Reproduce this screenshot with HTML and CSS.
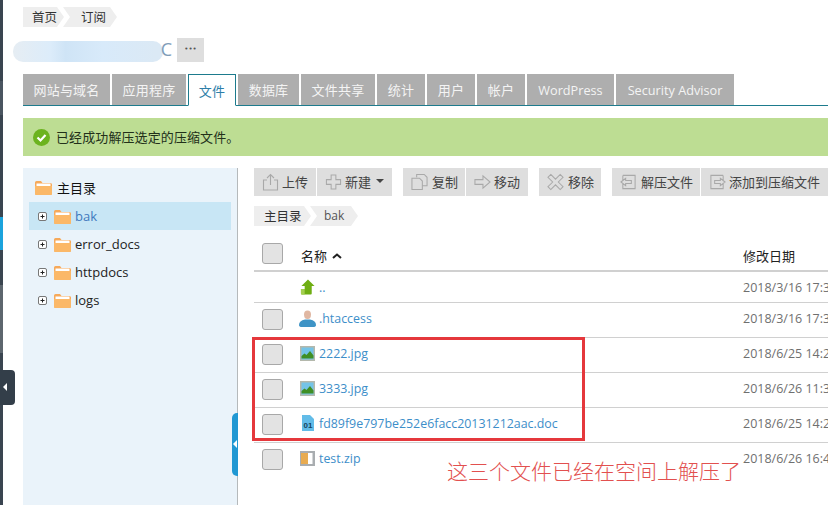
FILE: index.html
```html
<!DOCTYPE html>
<html lang="zh">
<head>
<meta charset="utf-8">
<title>文件</title>
<link rel="stylesheet" href="styles.css">
</head>
<body>
<svg class="defs" width="0" height="0" aria-hidden="true">
  <symbol id="folder" viewBox="0 0 17 15">
    <path d="M0 2.500Q0 1 1.500 1H6L7.500 3H15.500Q17 3 17 4.500V13.500Q17 15 15.500 15H1.500Q0 15 0 13.500Z" fill="#f6a95a"/>
    <rect x="1.500" y="3.500" width="14" height="2.500" fill="#fff"/>
    <path d="M0 6H17V13.500Q17 15 15.500 15H1.500Q0 15 0 13.500Z" fill="#fbb868"/>
  </symbol>
  <symbol id="plus" viewBox="0 0 9 9">
    <rect x=".5" y=".5" width="8" height="8" rx="1.500" fill="#fff" stroke="#777"/>
    <path d="M2.500 4.500H6.500M4.500 2.500V6.500" stroke="#222"/>
  </symbol>
  <symbol id="pic" viewBox="0 0 15 15">
    <rect width="15" height="15" fill="#b4b8ac"/>
    <rect x="1.500" y="1.500" width="12" height="12" fill="#74c4e8"/>
    <path d="M1.500 12.500V10L4.500 7.500L6.500 9L10 5L13.500 9.500V12.500Z" fill="#3f8f25"/>
  </symbol>
</svg>

<div class="page">
  <div class="rail">
    <div class="rail-a"></div>
    <div class="rail-light r1"></div>
    <div class="rail-b"></div>
    <div class="rail-blue"></div>
    <div class="rail-c"></div>
    <div class="rail-light r2"></div>
  </div>
  <main class="main">
    <nav class="crumbs top-crumbs">
      <span class="crumb first">首页</span>
      <span class="crumb last">订阅</span>
    </nav>
    <div class="title-row">
      <div class="masked"><span class="masked-end">C</span></div>
      <button class="more">•••</button>
    </div>
    <div class="tabs">
      <span class="tab t1">网站与域名</span>
      <span class="tab t2">应用程序</span>
      <span class="tab active">文件</span>
      <span class="tab t3">数据库</span>
      <span class="tab t2">文件共享</span>
      <span class="tab t4">统计</span>
      <span class="tab t4">用户</span>
      <span class="tab t4">帐户</span>
      <span class="tab t5">WordPress</span>
      <span class="tab t6">Security Advisor</span>
    </div>
    <div class="notice">
      <svg class="ok" width="17" height="17" viewBox="0 0 17 17"><circle cx="8.500" cy="8.500" r="8.500" fill="#6cb31f"/><path d="M4.500 8.500L7.500 11.500L12.500 6" fill="none" stroke="#fff" stroke-width="2.200"/></svg>
      <span>已经成功解压选定的压缩文件。</span>
    </div>
    <div class="workspace">
      <aside class="tree">
        <div class="tree-root"><svg class="folder"><use href="#folder"/></svg><span>主目录</span></div>
        <div class="tree-item selected"><svg class="plus"><use href="#plus"/></svg><svg class="folder"><use href="#folder"/></svg><span>bak</span></div>
        <div class="tree-item"><svg class="plus"><use href="#plus"/></svg><svg class="folder"><use href="#folder"/></svg><span>error_docs</span></div>
        <div class="tree-item"><svg class="plus"><use href="#plus"/></svg><svg class="folder"><use href="#folder"/></svg><span>httpdocs</span></div>
        <div class="tree-item"><svg class="plus"><use href="#plus"/></svg><svg class="folder"><use href="#folder"/></svg><span>logs</span></div>
        <div class="tree-handle"></div>
      </aside>
      <section class="files">
        <div class="toolbar">
          <div class="group">
            <span class="tool w-upload"><svg viewBox="0 0 16 18" class="ti tight"><path d="M4.500 7H1V17H15V7H11.500M8 12V2M4.500 5L8 1.500L11.500 5" /></svg>上传</span>
            <span class="tool w-new"><svg viewBox="0 0 18 18" class="ti tight"><path d="M6.500 1.500H11.500V6.500H16.500V11.500H11.500V16.500H6.500V11.500H1.500V6.500H6.500Z"/></svg>新建<i class="caret"></i></span>
          </div>
          <div class="group">
            <span class="tool w-copy"><svg viewBox="0 0 18 18" class="ti"><path d="M6 4V1H14L17 4V13H12M1 5H9L12 8V17H1Z"/></svg>复制</span>
            <span class="tool w-move"><svg viewBox="0 0 18 18" class="ti tight"><path d="M1 6.500H9.500V2.500L17 9L9.500 15.500V11.500H1Z"/></svg>移动</span>
          </div>
          <div class="group">
            <span class="tool w-del"><svg viewBox="0 0 18 18" class="ti"><path d="M4 1L9 6L14 1L17 4L12 9L17 14L14 17L9 12L4 17L1 14L6 9L1 4Z"/></svg>移除</span>
          </div>
          <div class="group">
            <span class="tool w-ext"><svg viewBox="0 0 18 18" class="ti"><path d="M3 2H16V16H3V11M3 7V2M1 9L6 5V7.500H12V10.500H6V13Z"/></svg>解压文件</span>
            <span class="tool w-add"><svg viewBox="0 0 18 18" class="ti tight"><path d="M15 2H2V16H15V11M15 7V2M17 9L12 5V7.500H6V10.500H12V13Z"/></svg>添加到压缩文件</span>
          </div>
        </div>
        <nav class="crumbs path-crumbs">
          <span class="crumb first">主目录</span>
          <span class="crumb last latin">bak</span>
        </nav>
        <div class="table">
          <div class="row head">
            <span class="cell-check"><i class="check"></i></span>
            <span class="cell-name"><b class="name-head">名称</b><svg class="up" viewBox="0 0 10 6"><path d="M1 5L5 1.500L9 5" fill="none" stroke="#222" stroke-width="2"/></svg></span>
            <span class="cell-date date-head">修改日期</span>
          </div>
          <div class="row r-up">
            <span class="cell-check"></span>
            <span class="cell-name"><svg class="fi" viewBox="0 0 16 17"><path d="M8.500 0L15.500 7H12.500V15Q12.500 16 11.500 16H2Q1 16 1 15V10H5V7H1.500Z" fill="#6fae13"/><path d="M1 10H5V16H2Q1 16 1 15Z" fill="#a4cf4f"/></svg><a>..</a></span>
            <span class="cell-date">2018/3/16 17:31</span>
          </div>
          <div class="row r-std">
            <span class="cell-check"><i class="check"></i></span>
            <span class="cell-name"><svg class="fi wide" viewBox="0 0 17 17"><path d="M5 4.500Q5 .5 8.500 .5T12 4.500Q12 9 8.500 9T5 4.500Z" fill="#e0b7a2"/><path d="M0 15Q0 10.500 6 9.500H11Q17 10.500 17 15Q17 17 14 17H3Q0 17 0 15Z" fill="#3f94c6"/></svg><a>.htaccess</a></span>
            <span class="cell-date">2018/3/16 17:31</span>
          </div>
          <div class="row r-std">
            <span class="cell-check"><i class="check"></i></span>
            <span class="cell-name"><svg class="fi"><use href="#pic"/></svg><a>2222.jpg</a></span>
            <span class="cell-date">2018/6/25 14:26</span>
          </div>
          <div class="row r-std">
            <span class="cell-check"><i class="check"></i></span>
            <span class="cell-name"><svg class="fi"><use href="#pic"/></svg><a>3333.jpg</a></span>
            <span class="cell-date">2018/6/26 11:32</span>
          </div>
          <div class="row r-std">
            <span class="cell-check"><i class="check"></i></span>
            <span class="cell-name"><svg class="fi" viewBox="0 0 15 17"><path d="M2 0H10L14 4V16H2Z" fill="#62bce8"/><text x="8" y="13" class="doc-num">01</text></svg><a>fd89f9e797be252e6facc20131212aac.doc</a></span>
            <span class="cell-date">2018/6/25 14:26</span>
          </div>
          <div class="row r-std last-row">
            <span class="cell-check"><i class="check"></i></span>
            <span class="cell-name"><svg class="fi" viewBox="0 0 15 15"><rect width="15" height="15" fill="#a9adb0"/><rect x="1" y="2" width="7" height="11" fill="#e8ab50"/><rect x="8" y="2" width="4.500" height="11" fill="#fff"/></svg><a>test.zip</a></span>
            <span class="cell-date">2018/6/26 16:41</span>
          </div>
        </div>
      </section>
    </div>
  </main>
</div>

<div class="rail-handle"></div>
<div class="mark"></div>
<div class="note">这三个文件已经在空间上解压了</div>
</body>
</html>
```

FILE: styles.css
```css
* { box-sizing: border-box; }
html, body { margin: 0; height: 505px; overflow: hidden; background: #fff; }
body {
  position: relative;
  width: 828px;
  font-family: "Open Sans", "Noto Sans CJK SC", sans-serif;
  font-size: 13px;
  color: #333;
}
.defs { position: absolute; }
.page { display: flex; height: 505px; }

.rail { width: 3px; flex: none; background: #3a4550; display: flex; flex-direction: column; }
.rail-a { height: 81px; }
.rail-b { height: 102px; }
.rail-c { height: 35px; }
.r1 { height: 34px; background: #4a5560; }
.r2 { height: 68px; background: #5d666e; }
.rail-blue { height: 33px; background: #1ba3dd; }

.main { width: 825px; flex: none; padding: 7px 0 0 20px; overflow: hidden; }

.crumbs { display: flex; height: 20px; }
.crumb {
  display: flex;
  align-items: center;
  background: #eee;
  color: #333;
  font-size: 12.500px;
  padding-bottom: 2px;
  font-family: "Noto Sans CJK SC", sans-serif;
}
.top-crumbs .first { width: 41px; padding-left: 9px; clip-path: polygon(0 0, 34px 0, 41px 50%, 34px 100%, 0 100%); }
.top-crumbs .last { width: 54px; margin-left: -1px; padding-left: 18px; clip-path: polygon(0 0, 47px 0, 54px 50%, 47px 100%, 0 100%, 7px 50%); }

.title-row { display: flex; align-items: center; height: 24px; margin-top: 11px; }
.masked {
  width: 150px;
  height: 21px;
  margin-left: -10px;
  margin-top: 3px;
  border-radius: 10px;
  background: linear-gradient(90deg, #e6edf3 0, #dcecfa 25%, #cfe4f6 35%, #d8eafa 60%, #dbe9f5 95%);
  position: relative;
}
.masked-end { position: absolute; right: -9px; top: -4px; color: #7f9db8; font-size: 18px; }
.more {
  width: 27px;
  height: 24px;
  margin-left: 14px;
  border: 0;
  padding: 0 0 2px;
  background: #dedede;
  color: #555;
  font-size: 7px;
  font-family: "DejaVu Sans", sans-serif;
}

.tabs {
  display: flex;
  height: 32px;
  margin-top: 12px;
  gap: 2px;
  border-bottom: 1px solid #1d7b8d;
}
.tab {
  height: 31px;
  background: #aeaeae;
  color: #f4f4f4;
  display: flex;
  align-items: center;
  justify-content: center;
  font-size: 13px;
  letter-spacing: .2px;
}
.tab.t1 { width: 87px; }
.tab.t2 { width: 74px; }
.tab.t3 { width: 61px; }
.tab.t4 { width: 48px; }
.tab.t5 { width: 87px; font-size: 12.700px; letter-spacing: 0; }
.tab.t6 { width: 118px; font-size: 12.700px; letter-spacing: 0; }
.tab.active {
  width: 48px;
  height: 32px;
  background: #fff;
  color: #2d7ea8;
  border: 1px solid #1d7b8d;
  border-bottom-color: #fff;
}

.notice {
  display: flex;
  align-items: center;
  gap: 6px;
  height: 38px;
  margin-top: 12px;
  padding: 0 0 1px 10px;
  background: #bddd93;
  color: #22301a;
  font-size: 13px;
  font-family: "Noto Sans CJK SC", sans-serif;
  letter-spacing: .1px;
}
.notice .ok { margin-top: 1px; }

.workspace { display: flex; margin-top: 12px; height: 337px; }

.tree {
  position: relative;
  width: 215px;
  flex: none;
  background: #eaf3fa;
  border-right: 1px solid #b5b9bb;
  padding-top: 6px;
}
.tree-root { display: flex; align-items: center; height: 28px; padding: 0 0 2px 12px; gap: 5px; color: #111; font-family: "Noto Sans CJK SC", sans-serif; }
.tree-item { display: flex; align-items: center; height: 28px; margin: 0 6px; padding-left: 9px; color: #222; font-size: 13px; }
.tree-item.selected { background: #c8e6f5; color: #3f79bd; }
.plus { width: 9px; height: 9px; margin-right: 7px; }
.folder { width: 17px; height: 15px; margin-right: 4px; }
.tree-root .folder { margin-right: 0; }
.tree-handle {
  position: absolute;
  right: -1px;
  top: 245px;
  width: 6px;
  height: 63px;
  background: #2198d3;
  border-radius: 5px 0 0 5px;
}
.tree-handle::after {
  content: "";
  position: absolute;
  left: 1px;
  top: 27px;
  border: 4px solid transparent;
  border-left: 0;
  border-right: 4px solid #fff;
}

.files { flex: 1; padding-left: 16px; min-width: 0; }

.toolbar { display: flex; gap: 11px; height: 28px; }
.group { display: flex; gap: 1px; flex: none; }
.tool {
  display: flex;
  align-items: center;
  height: 28px;
  padding: 0 0 2px 8px;
  background: #dedede;
  color: #444;
  font-family: "Noto Sans CJK SC", sans-serif;
  font-size: 13px;
  white-space: nowrap;
}
.ti { width: 17px; height: 18px; margin-top: 2px; margin-right: 4px; fill: none; stroke: #a9a9a9; stroke-width: 1.100; flex: none; }
.ti.tight { margin-right: 3px; }
.w-upload { width: 62px; }
.w-new { width: 75px; }
.w-copy { width: 62px; }
.w-move { width: 62px; }
.w-del { width: 62px; }
.w-ext { width: 88px; }
.w-add { width: 127px; }
.caret { display: inline-block; margin-left: 5px; border: 4px solid transparent; border-top-color: #444; border-bottom: 0; }

.path-crumbs { margin-top: 10px; }
.path-crumbs .first { width: 57px; padding-left: 10px; clip-path: polygon(0 0, 50px 0, 57px 50%, 50px 100%, 0 100%); }
.path-crumbs .last { width: 48px; margin-left: -1px; padding-left: 14px; clip-path: polygon(0 0, 41px 0, 48px 50%, 41px 100%, 0 100%, 7px 50%); }
.crumb.latin { font-family: "Open Sans", sans-serif; font-size: 12px; color: #555; }

.table { margin-top: 11px; width: 574px; }
.row { display: flex; align-items: center; border-bottom: 1px solid #d0d0d0; white-space: nowrap; }
.row.head { height: 35px; border-bottom-width: 2px; align-items: flex-start; }
.row.r-up { height: 31px; }
.row.r-std { height: 35px; }
.row.last-row { border-bottom-color: transparent; }
.cell-check { width: 46px; flex: none; padding-left: 8px; display: flex; }
.r-std .cell-check { padding-bottom: 2px; }
.cell-name { width: 443px; flex: none; display: flex; align-items: center; }
.cell-date { color: #6f6f6f; font-size: 12.500px; }
.r-std .cell-name, .r-std .cell-date { padding-bottom: 3px; }
.head .cell-check { padding-top: 6px; }
.head .cell-name, .head .cell-date { padding-top: 9px; }
.name-head, .date-head { font-weight: 400; color: #222; font-family: "Noto Sans CJK SC", sans-serif; font-size: 13px; }
.name-head { margin-left: 1px; }
.up { width: 10px; height: 6px; margin-left: 5px; }
.check {
  display: block;
  width: 21px;
  height: 21px;
  background: #e3e3e3;
  border: 1px solid #a8a8a8;
  border-radius: 3px;
}
.fi { width: 15px; height: 17px; margin-right: 4px; flex: none; }
.fi.wide { width: 17px; margin-left: -1px; margin-right: 3px; }
a { color: #3d8ec9; font-size: 12.400px; }
.doc-num { font-family: "Liberation Sans", sans-serif; font-size: 8px; font-weight: 700; fill: #17445e; text-anchor: middle; }

.rail-handle {
  position: absolute;
  left: 0;
  top: 370px;
  width: 15px;
  height: 35px;
  background: #333e49;
  border-radius: 0 4px 4px 0;
}
.rail-handle::after {
  content: "";
  position: absolute;
  left: 3px;
  top: 13px;
  border: 4px solid transparent;
  border-left: 0;
  border-right: 4px solid #fff;
}
.mark {
  position: absolute;
  left: 252px;
  top: 337px;
  width: 333px;
  height: 104px;
  border: 3px solid #e5383c;
}
.note {
  position: absolute;
  left: 447px;
  top: 455px;
  font-family: "Noto Sans CJK SC", serif;
  font-weight: 300;
  font-size: 21px;
  line-height: 30px;
  color: #e2504f;
  white-space: nowrap;
}
```
